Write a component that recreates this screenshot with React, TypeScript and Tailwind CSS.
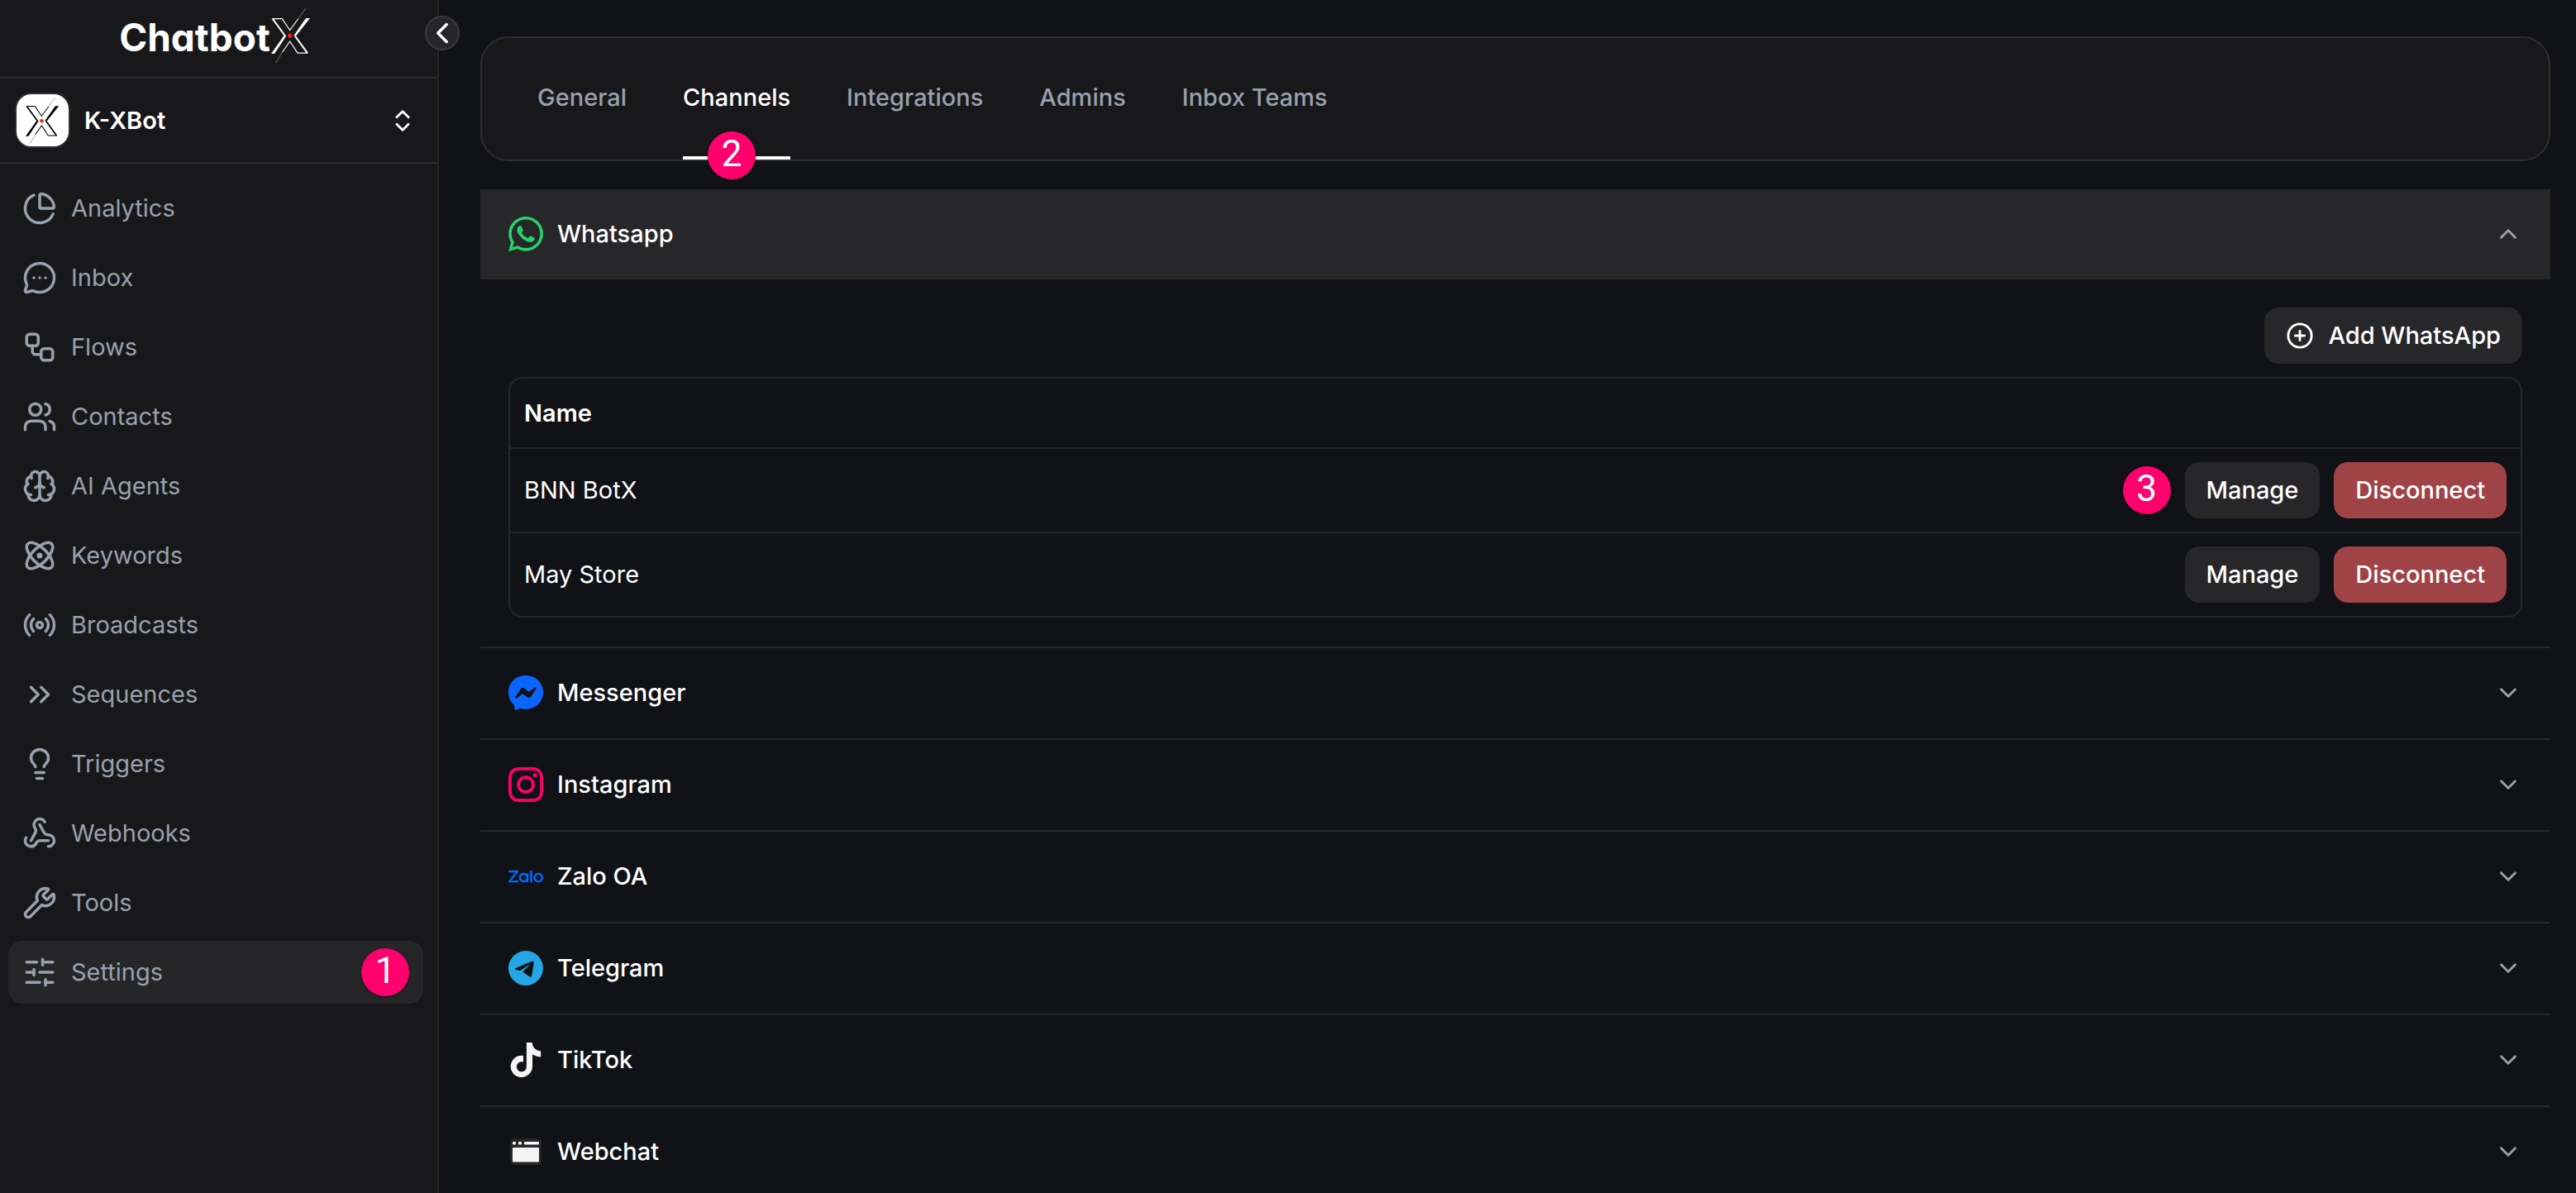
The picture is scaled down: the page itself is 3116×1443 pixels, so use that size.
import { useState } from "react";
import type { ComponentType } from "react";
import {
  Atom,
  Brain,
  ChartPie,
  ChevronDown,
  ChevronLeft,
  ChevronUp,
  ChevronsRight,
  ChevronsUpDown,
  CirclePlus,
  Lightbulb,
  MessageCircleMore,
  Radio,
  SlidersHorizontal,
  Users,
  Webhook,
  Workflow,
  Wrench,
} from "lucide-react";
import {
  SiInstagram,
  SiMessenger,
  SiTelegram,
  SiTiktok,
  SiWhatsapp,
  SiZalo,
} from "react-icons/si";

type IconType = ComponentType<{ className?: string }>;

type NavItem = {
  label: string;
  icon: IconType;
  step?: number;
};

type Channel = {
  id: string;
  label: string;
  icon: IconType;
  color: string;
};

const navItems: NavItem[] = [
  { label: "Analytics", icon: ChartPie },
  { label: "Inbox", icon: MessageCircleMore },
  { label: "Flows", icon: Workflow },
  { label: "Contacts", icon: Users },
  { label: "AI Agents", icon: Brain },
  { label: "Keywords", icon: Atom },
  { label: "Broadcasts", icon: Radio },
  { label: "Sequences", icon: ChevronsRight },
  { label: "Triggers", icon: Lightbulb },
  { label: "Webhooks", icon: Webhook },
  { label: "Tools", icon: Wrench },
  { label: "Settings", icon: SlidersHorizontal, step: 1 },
];

const tabs = ["General", "Channels", "Integrations", "Admins", "Inbox Teams"];

const channels: Channel[] = [
  { id: "whatsapp", label: "Whatsapp", icon: SiWhatsapp, color: "text-[#25d366]" },
  { id: "messenger", label: "Messenger", icon: SiMessenger, color: "text-[#0866ff]" },
  { id: "instagram", label: "Instagram", icon: SiInstagram, color: "text-[#ff0069]" },
  { id: "zalo", label: "Zalo OA", icon: SiZalo, color: "text-[#0068ff]" },
  { id: "telegram", label: "Telegram", icon: SiTelegram, color: "text-[#26a5e4]" },
  { id: "tiktok", label: "TikTok", icon: SiTiktok, color: "text-neutral-100" },
  { id: "webchat", label: "Webchat", icon: WebchatIcon, color: "text-neutral-100" },
];

const accounts = [
  { name: "BNN BotX", step: 3 },
  { name: "May Store", step: undefined },
];

function WebchatIcon({ className }: { className?: string }) {
  return (
    <svg viewBox="0 0 42 42" className={className} aria-hidden="true">
      <rect x="2" y="5" width="38" height="32" rx="5" fill="#262626" />
      <g fill="currentColor">
        <rect x="5" y="9" width="4" height="3.5" rx="1" />
        <rect x="12" y="9" width="4" height="3.5" rx="1" />
        <rect x="19" y="9" width="18" height="3.5" rx="1" />
        <rect x="5" y="16" width="32" height="17.5" rx="1" />
      </g>
    </svg>
  );
}

function LogoMark({ className }: { className?: string }) {
  return (
    <svg viewBox="0 0 50 68" className={className} fill="none" aria-hidden="true">
      <g stroke="currentColor">
        <path d="M43 1 33.5 14" strokeWidth="0.6" opacity="0.7" />
        <path d="M33.5 14 23.7 27.5 14.2 13.6H2.5" strokeWidth="1.2" />
        <path d="M2.5 13.4 18 34.5" strokeWidth="2" />
        <path d="M14.5 54 6.5 67" strokeWidth="0.6" opacity="0.7" />
        <path d="M14.5 54 23.7 41 33 55.2h12" strokeWidth="1.2" />
        <path d="M45 55.4 29.8 34.3" strokeWidth="2" />
      </g>
      <g fill="currentColor">
        <path d="M16.4 34.3h3L5 55.9H1z" />
        <path d="M31.2 34.3h-3L43 13.1h5z" />
      </g>
      <circle cx="23.8" cy="34.2" r="2.6" fill="#ff1a0a" />
    </svg>
  );
}

function StepBadge({ step }: { step: number }) {
  return (
    <span className="flex size-[58px] shrink-0 items-center justify-center rounded-full bg-[#ff006f] pb-1 font-['Roboto',sans-serif] text-[44px] leading-none font-normal text-white shadow-sm shadow-black/60">
      {step}
    </span>
  );
}

function Sidebar() {
  return (
    <aside className="relative flex w-[531px] shrink-0 flex-col border-r-2 border-zinc-800 bg-[#18181a]">
      <div className="flex h-[95px] items-center justify-center border-b-2 border-[#2e2e31] pr-2 pb-2">
        <span className="pt-1 text-[46px] leading-none font-bold [font-feature-settings:'cv11']">
          Chatbot
        </span>
        <LogoMark className="h-[68px] w-[50px]" />
      </div>
      <button
        type="button"
        aria-label="Collapse sidebar"
        className="absolute top-[19px] -right-[27px] flex size-[42px] cursor-pointer items-center justify-center rounded-full border-2 border-[#3b3b3e] bg-[#262628]"
      >
        <ChevronLeft className="size-[42px] shrink-0" />
      </button>

      <button
        type="button"
        className="flex h-[103px] cursor-pointer items-center gap-[17px] border-b-2 border-[#2e2e31] pr-[25px] pl-[18px] text-left"
      >
        <span className="flex size-[67px] items-center justify-center rounded-[20px] border-2 border-[#2e2e31] bg-white text-black">
          <LogoMark className="h-[58px] w-[43px]" />
        </span>
        <span className="flex-1 font-semibold">K-XBot</span>
        <ChevronsUpDown className="size-[34px]" />
      </button>

      <nav className="flex flex-col gap-2 py-4 pr-[17px] pl-[10px]">
        {navItems.map(({ label, icon: Icon, step }) => (
          <a
            key={label}
            href={`#${label.toLowerCase().replace(" ", "-")}`}
            className={`flex h-[76px] items-center gap-[17px] rounded-[17px] px-[17px] text-gray-400 ${
              step ? "bg-[#262628]" : ""
            }`}
          >
            <Icon className="size-[42px]" />
            <span className="flex-1">{label}</span>
            {step && <StepBadge step={step} />}
          </a>
        ))}
      </nav>
    </aside>
  );
}

function AccountsTable() {
  return (
    <div className="overflow-hidden rounded-[17px] border-2 border-zinc-800">
      <table className="w-full text-left">
        <thead>
          <tr className="h-[84px] border-b-2 border-zinc-800">
            <th className="px-[17px] font-semibold">Name</th>
            <td />
          </tr>
        </thead>
        <tbody>
          {accounts.map(({ name, step }) => (
            <tr key={name} className="border-b-2 border-zinc-800 last:border-b-0">
              <td className="px-[17px]">{name}</td>
              <td className="px-[17px] py-4">
                <div className="flex items-center justify-end gap-[17px] font-medium">
                  {step && <StepBadge step={step} />}
                  <button
                    type="button"
                    className="h-[68px] cursor-pointer rounded-[17px] bg-[#27272a] px-[26px]"
                  >
                    Manage
                  </button>
                  <button
                    type="button"
                    className="h-[68px] cursor-pointer rounded-[17px] bg-[#9f4347] px-[26px]"
                  >
                    Disconnect
                  </button>
                </div>
              </td>
            </tr>
          ))}
        </tbody>
      </table>
    </div>
  );
}

export default function App() {
  const [activeTab, setActiveTab] = useState("Channels");
  const [openChannel, setOpenChannel] = useState("whatsapp");

  return (
    <div className="flex h-screen overflow-hidden bg-[#101217] font-['Inter',sans-serif] text-[29px] leading-[42px] text-white">
      <Sidebar />

      <main className="min-w-0 flex-1 pt-11 pr-[31px] pl-[50px]">
        <div className="mb-[34px] flex h-[151px] gap-[68px] rounded-[34px] border-2 border-[#2e2e31] bg-[#18181a] px-[67px] font-medium">
          {tabs.map((tab) => (
            <button
              key={tab}
              type="button"
              onClick={() => setActiveTab(tab)}
              className={`relative cursor-pointer border-b-4 ${
                tab === activeTab
                  ? "border-white text-white"
                  : "border-transparent text-gray-400"
              }`}
            >
              {tab}
              {tab === "Channels" && (
                <span className="absolute -bottom-[28px] left-[30px]">
                  <StepBadge step={2} />
                </span>
              )}
            </button>
          ))}
        </div>

        {channels.map(({ id, label, icon: Icon, color }) => {
          const open = id === openChannel;
          const Chevron = open ? ChevronUp : ChevronDown;

          return (
            <section
              key={id}
              className="border-t-2 border-zinc-800 first-of-type:border-t-0"
            >
              <button
                type="button"
                aria-expanded={open}
                onClick={() => setOpenChannel(open ? "" : id)}
                className={`flex w-full cursor-pointer items-center gap-[17px] px-[34px] pt-[33px] pb-[34px] text-left font-medium ${
                  open ? "bg-[#27272a]" : ""
                }`}
              >
                <Icon className={`size-[42px] ${color}`} />
                <span className="flex-1">{label}</span>
                <Chevron className="size-[34px] text-zinc-400" />
              </button>

              {open && id === "whatsapp" && (
                <div className="flex flex-col gap-4 px-[34px] pt-[34px] pb-[35px]">
                  <button
                    type="button"
                    className="flex h-[68px] cursor-pointer items-center gap-[17px] self-end rounded-[17px] bg-[#27272a] px-[26px] font-medium"
                  >
                    <CirclePlus className="size-[34px]" />
                    Add WhatsApp
                  </button>
                  <AccountsTable />
                </div>
              )}
            </section>
          );
        })}
      </main>
    </div>
  );
}
